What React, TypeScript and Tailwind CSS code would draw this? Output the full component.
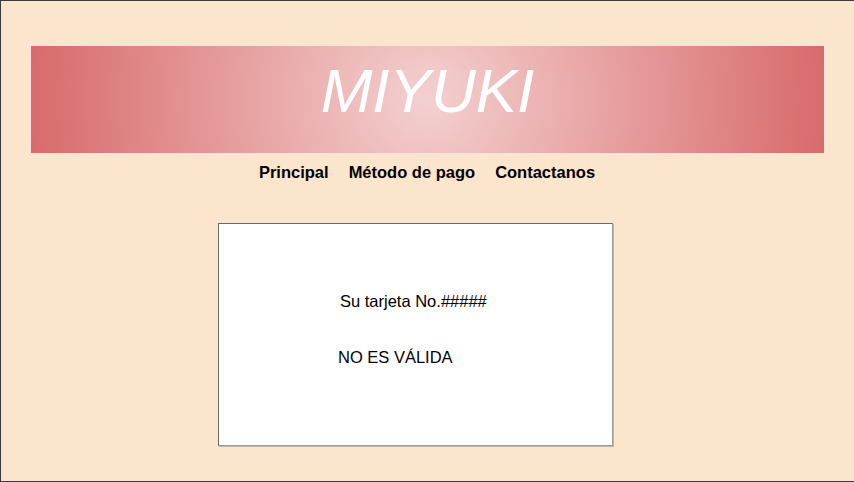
import React from 'react';

export default function App() {
  const links = ['Principal', 'Método de pago', 'Contactanos'];

  return (
    <div className="h-[482px] w-full overflow-hidden border-t border-l border-b border-[#3a3a3a] bg-[#fce5cd] font-['Liberation_Sans',Arial,sans-serif] text-black">
      {/* Header banner */}
      <header className="mx-[29px] mt-[44px] h-[109px] border border-[#f7e2e0] bg-[radial-gradient(circle,#f4d0d0_0%,#d86a6a_100%)] pt-[14px] text-center">
        <h1 className="text-[62px] leading-none italic font-normal text-white">MIYUKI</h1>
      </header>

      {/* Navigation */}
      <nav className="mt-[6px] flex justify-center gap-[20px] pr-[1px] text-[16.5px] leading-6 font-bold">
        {links.map((l) => (
          <a key={l} href="#">{l}</a>
        ))}
      </nav>

      {/* Result card */}
      <section className="mt-[39px] ml-[217px] h-[223px] w-[395px] border border-t-[#6a6a6a] border-l-[#6a6a6a] border-r-[#9a9a9a] border-b-[#9a9a9a] bg-white pt-[65px] text-[16.5px] leading-6 shadow-[1px_1px_0_#b8b8b8]">
        <p className="pl-[121px]">Su tarjeta No.#####</p>
        <p className="mt-[32px] pl-[119px]">NO ES VÁLIDA</p>
      </section>
    </div>
  );
}
